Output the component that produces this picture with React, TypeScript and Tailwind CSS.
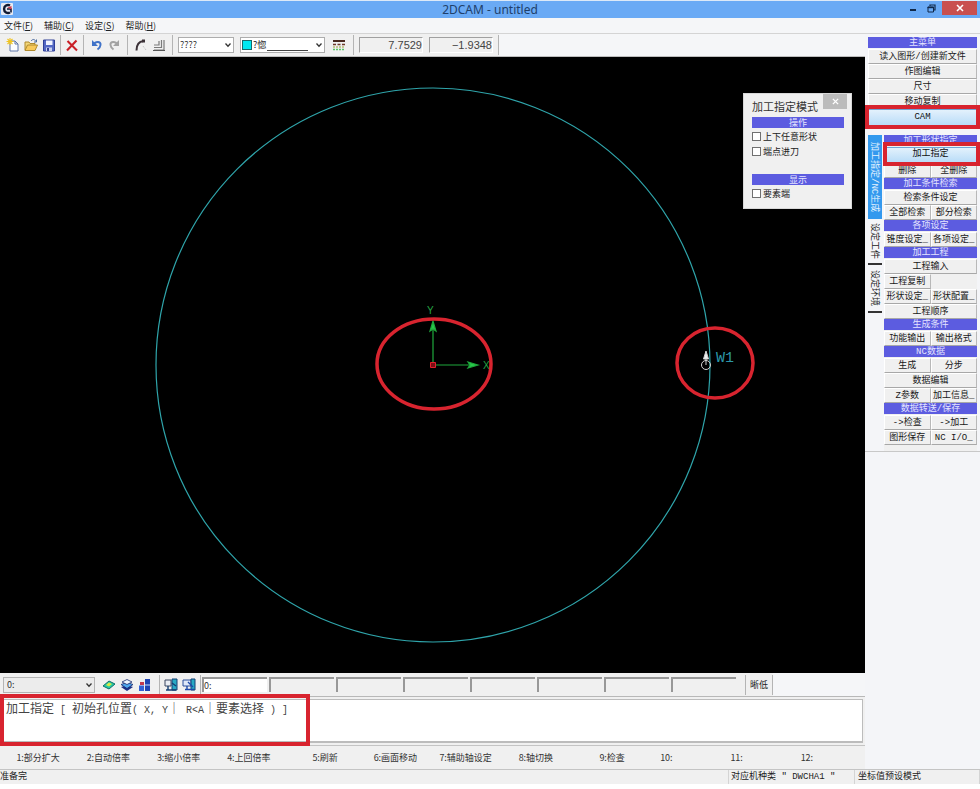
import React, { useState } from 'react'

type MenuRow =
    | { kind: 'title'; label: string }
    | { kind: 'row'; labels: string[]; half?: boolean }

const menus = [
    { label: '文件', key: 'F' },
    { label: '辅助', key: 'C' },
    { label: '设定', key: 'S' },
    { label: '帮助', key: 'H' },
]

const mainMenu = ['读入图形/创建新文件', '作图编辑', '尺寸', '移动复制']

const camMenu: MenuRow[] = [
    { kind: 'row', labels: ['删除', '全删除'] },
    { kind: 'title', label: '加工条件检索' },
    { kind: 'row', labels: ['检索条件设定'] },
    { kind: 'row', labels: ['全部检索', '部分检索'] },
    { kind: 'title', label: '各项设定' },
    { kind: 'row', labels: ['锥度设定_', '各项设定_'] },
    { kind: 'title', label: '加工工程' },
    { kind: 'row', labels: ['工程输入'] },
    { kind: 'row', labels: ['工程复制'], half: true },
    { kind: 'row', labels: ['形状设定_', '形状配置_'] },
    { kind: 'row', labels: ['工程顺序'] },
    { kind: 'title', label: '生成条件' },
    { kind: 'row', labels: ['功能输出', '输出格式'] },
    { kind: 'title', label: 'NC数据' },
    { kind: 'row', labels: ['生成', '分步'] },
    { kind: 'row', labels: ['数据编辑'] },
    { kind: 'row', labels: ['Z参数', '加工信息_'] },
    { kind: 'title', label: '数据转送/保存' },
    { kind: 'row', labels: ['->检查', '->加工'] },
    { kind: 'row', labels: ['图形保存', 'NC I/O_'] },
]

const functionKeys = [
    ['1:部分扩大', '2:自动倍率', '3:缩小倍率', '4:上回倍率'],
    ['5:刷新', '6:画面移动', '7:辅助轴设定', '8:轴切换'],
    ['9:检查', '10:', '11:', '12:'],
]

const Separator = () => <div className="h-5 w-px shrink-0 bg-[#b4b4b4]" />

const Chevron = () => (
    <svg viewBox="0 0 8 6" className="pointer-events-none absolute right-[2px] top-1/2 h-[6px] w-[8px] -translate-y-1/2">
        <path d="M1.5 1.5 4 4.2 6.5 1.5" fill="none" stroke="#333" strokeWidth="1.3" />
    </svg>
)

const IconButton = ({ label, children }: { label: string; children: React.ReactNode }) => (
    <button aria-label={label} className="size-[14px] shrink-0">
        <svg viewBox="0 0 14 14" className="size-full">{children}</svg>
    </button>
)

const SectionTitle = ({ label }: { label: string }) => (
    <div className="mb-px h-[11px] overflow-hidden bg-[#5c5ce0] text-center leading-[12px] text-[#e4e4ff]">{label}</div>
)

const MenuButton = ({ label }: { label: string }) => (
    <button className="h-[15px] flex-1 overflow-hidden whitespace-nowrap border border-b-[#a8a8a8] border-l-white border-r-[#b8b8b8] border-t-white bg-[#f0f0f0] leading-[14px] text-[#181818]">
        {label}
    </button>
)

const activeButton = 'w-full border border-[#6fa5d6] bg-linear-to-b from-[#e3f1fc] to-[#b9dcf8] text-[#111]'

const TitleBar = () => (
    <header className="relative flex h-[18px] shrink-0 items-center justify-center border-t border-[#dce9f8] bg-[#6aaaf5]">
        <svg viewBox="0 0 12 12" className="absolute left-px top-[2px] size-3">
            <rect width="12" height="12" rx="1" fill="#e6e9f2" />
            <path d="M9 2.5A4 4 0 1 0 9 9.5" fill="none" stroke="#111a33" strokeWidth="2.4" />
            <path d="M6 6h4v3.5" fill="none" stroke="#111a33" strokeWidth="1.6" />
            <path d="M6.5 4.5 10.5 3v3.5z" fill="#d43a4c" />
        </svg>
        <h1 className="font-['Noto_Sans',sans-serif] text-[12px] leading-4 text-[#20406b]">2DCAM - untitled</h1>
        <div className="absolute right-[3px] top-0 flex h-[14px] items-center">
            <button aria-label="最小化" className="flex h-full w-5 items-center justify-center">
                <svg viewBox="0 0 7 7" className="size-[7px]"><path d="M0 5h6" stroke="#10294a" strokeWidth="2" /></svg>
            </button>
            <button aria-label="还原" className="mr-[3px] flex h-full w-4 items-center justify-center">
                <svg viewBox="0 0 9 9" className="size-[9px]">
                    <path d="M3 2V1h5v5H7" fill="none" stroke="#10294a" strokeWidth="1.2" />
                    <path d="M1 3h5.5v5H1z" fill="none" stroke="#10294a" />
                    <path d="M.5 3.5H7" stroke="#10294a" strokeWidth="1.4" />
                </svg>
            </button>
            <button aria-label="关闭" className="flex h-full w-[35px] items-center justify-center bg-[#c9504f]">
                <svg viewBox="0 0 8 8" className="size-2"><path d="m1 1 6 6M7 1 1 7" stroke="#fff" strokeWidth="1.6" /></svg>
            </button>
        </div>
    </header>
)

const Toolbar = () => (
    <div className="flex h-[23px] shrink-0 items-center border-b border-[#bdbdbd] bg-[#f0f0f0]">
        <div className="flex items-center gap-1 pl-[6px]">
            <IconButton label="新建">
                <path d="M4 3h5l3 3v7H4z" fill="#fdfdff" stroke="#5f76a8" />
                <path d="M9 3v3h3" fill="none" stroke="#5f76a8" />
                <path d="M4 0v7M.5 3.5h7M1.5 1l5 5M6.5 1l-5 5" stroke="#f0c420" strokeWidth="1.1" />
            </IconButton>
            <IconButton label="打开">
                <path d="M1 12V4h4l1 1.5h5V7" fill="#f3d77a" stroke="#b08a2c" />
                <path d="M1 12.5 3.5 7H13.5L11 12.5z" fill="#f7c95a" stroke="#b08a2c" />
                <path d="M7 3c2-2.5 4-1.5 5 .5M12.5 1.5V4H10" fill="none" stroke="#4b6a9e" />
            </IconButton>
            <IconButton label="保存">
                <path d="M1.5 2h11v11h-11z" fill="#5468c4" stroke="#2f3f96" />
                <path d="M4 2.5h6.5V7H4z" fill="#f1f4ff" />
                <path d="M4 9.5h6V13H4z" fill="#c9d0ee" />
                <path d="M5 10h2v3H5z" fill="#2f3f96" />
            </IconButton>
        </div>
        <div className="flex items-center gap-1 pl-1">
            <Separator />
            <IconButton label="删除">
                <path d="M2.5 3 12 12.5M11.5 2.5 2 12.5" stroke="#c91f26" strokeWidth="2.1" />
            </IconButton>
            <Separator />
        </div>
        <div className="flex items-center gap-[3px] px-[6px]">
            <IconButton label="撤销">
                <path d="M3.5 6.5C5.5 3 11 3 10.5 7 10.3 9 9 10.5 7.5 11.5" fill="none" stroke="#3f72c8" strokeWidth="2" />
                <path d="M2 2v6h6z" fill="#3f72c8" />
            </IconButton>
            <IconButton label="重做">
                <path d="M10.5 6.5C8.5 3 3 3 3.5 7 3.7 9 5 10.5 6.5 11.5" fill="none" stroke="#a3a3a3" strokeWidth="2" />
                <path d="M12 2v6H6z" fill="#a3a3a3" />
            </IconButton>
        </div>
        <Separator />
        <div className="flex items-center gap-1 px-[6px]">
            <IconButton label="圆弧">
                <path d="M2.5 12.5C2.5 7 5 3.5 9.5 3" fill="none" stroke="#3c3238" strokeWidth="2" />
                <path d="M8 1.5h3v3H8z" fill="#3c3238" />
                <path d="m9 8 3 4" stroke="#bbb" strokeDasharray="1 1" />
            </IconButton>
            <IconButton label="层叠">
                <path d="M2 12h10V2M2 9.5h7.5V2M2 7h5V3" fill="none" stroke="#7b7b7b" strokeWidth="1.2" />
                <path d="M1 12.5h12" stroke="#555" />
            </IconButton>
        </div>
        <Separator />
        <div className="relative ml-[5px] w-14">
            <select aria-label="线型" className="block h-4 w-full appearance-none border border-[#adadad] bg-white pl-px text-[9px] leading-[14px] text-[#333]">
                <option>????</option>
            </select>
            <Chevron />
        </div>
        <div className="relative ml-[6px] w-[85px]">
            <select aria-label="颜色" className="block h-4 w-full appearance-none border border-[#adadad] bg-white pl-[12px] text-[9px] leading-[14px] text-[#222]">
                <option>?惚</option>
            </select>
            <span className="pointer-events-none absolute left-[2px] top-[3px] size-[10px] border border-[#176a6a] bg-[#00e8f0]" />
            <span className="pointer-events-none absolute bottom-[2px] left-[27px] right-[17px] h-px bg-[#444]" />
            <Chevron />
        </div>
        <div className="flex items-center gap-[7px] px-[7px] pr-[5px]">
            <IconButton label="线宽">
                <path d="M1 3h12" stroke="#4a2a20" strokeWidth="2" />
                <path d="M1 6.5h12" stroke="#6e3a2b" strokeWidth="1.5" strokeDasharray="3 1.5" />
                <path d="M1 9h12" stroke="#a0a038" strokeDasharray="2 1" />
                <path d="M1 11.5h12" stroke="#58c468" strokeWidth="1.5" strokeDasharray="2 1" />
            </IconButton>
            <Separator />
        </div>
        <output className="h-4 w-16 border border-b-white border-l-[#a0a0a0] border-r-white border-t-[#a0a0a0] text-right font-['Liberation_Sans',sans-serif] text-[11px] leading-[15px] text-[#444]">7.7529</output>
        <output className="ml-[6px] mr-[5px] h-4 w-16 border border-b-white border-l-[#a0a0a0] border-r-white border-t-[#a0a0a0] text-right font-['Liberation_Sans',sans-serif] text-[11px] leading-[15px] text-[#444]">−1.9348</output>
        <Separator />
        <div className="h-full flex-1 bg-[#f5f6f8]" />
    </div>
)

const CheckRow = ({ id, label }: { id: string; label: string }) => {
    const [checked, setChecked] = useState<boolean>(false);
    return (
        <div className="flex h-[15px] items-center gap-[2px]">
            <input
                id={id}
                type="checkbox"
                checked={checked}
                onChange={() => setChecked(!checked)}
                className="size-[9px] shrink-0 appearance-none border border-[#707070] bg-white checked:bg-[#5c5ce0]"
            />
            <label htmlFor={id} className="whitespace-nowrap">{label}</label>
        </div>
    )
}

const ModeDialog = () => (
    <section className="absolute right-[13px] top-[36px] w-[109px] border border-[#d8d8d8] bg-[#f0f0f0] px-2 pb-[7px] text-[9px] leading-[11px] text-[#222]">
        <button aria-label="关闭" className="absolute right-1 top-0 flex h-[15px] w-6 items-center justify-center bg-[#bcbcbc]">
            <svg viewBox="0 0 8 8" className="size-[7px]"><path d="m1 1 6 6M7 1 1 7" stroke="#fff" strokeWidth="1.6" /></svg>
        </button>
        <h2 className="pb-[3px] pt-1 text-[11px] leading-4 text-[#333]">加工指定模式</h2>
        <div className="mr-[-1px]">
            <SectionTitle label="操作" />
            <CheckRow id="any-shape" label="上下任意形状" />
            <CheckRow id="end-feed" label="端点进刀" />
            <div className="mt-[15px]"><SectionTitle label="显示" /></div>
            <CheckRow id="element-end" label="要素端" />
        </div>
    </section>
)

const Canvas = () => (
    <main className="relative min-h-0 flex-1 overflow-hidden bg-black">
        <svg viewBox="0 0 865 616" className="absolute inset-0 size-full">
            <circle cx="433" cy="308" r="277" fill="none" stroke="#2fa5ab" strokeWidth="1.2" />
            <g stroke="#1fa83c" strokeWidth="1.2" fill="#27c94a">
                <path d="M433 305V268M436 308h40" />
                <path d="m433 264-3 10 3-2 3 2zM478 308l-10-3 2 3-2 3z" />
            </g>
            <path d="M430.500 305.500h5v5h-5z" fill="#7a0d14" stroke="#e0202c" />
            <g fill="#26a544" className="font-['Liberation_Sans',sans-serif] text-[10px]">
                <text x="427" y="257">Y</text>
                <text x="483" y="312">X</text>
            </g>
            <g stroke="#d4d4d4" fill="none">
                <circle cx="706" cy="308" r="4.500" />
                <path d="M706 308v-9" />
                <path d="m706 294-2.500 8h5z" fill="#eee" />
            </g>
            <text x="716" y="305" fill="#2b96a8" className="font-['Liberation_Mono',monospace] text-[15px]">W1</text>
            <g fill="none" stroke="#d8242f" strokeWidth="3.500">
                <ellipse cx="434" cy="307" rx="57" ry="45" />
                <ellipse cx="715" cy="306" rx="38" ry="35" />
            </g>
        </svg>
        <ModeDialog />
    </main>
)

const LayerBar = () => (
    <div className="flex h-6 shrink-0 items-center bg-[#f5f6f8]">
        <div className="flex h-full flex-1 items-center border-b border-[#b8b8b8] bg-[#f0f0f0] pl-[3px]">
            <div className="relative w-[92px]">
                <select aria-label="图层" className="block h-4 w-full appearance-none border border-[#b4b4b4] bg-[#ececec] pl-[3px] text-[9px] leading-[14px] text-[#333]">
                    <option>0:</option>
                </select>
                <Chevron />
            </div>
            <div className="flex items-center gap-1 px-[7px]">
                <IconButton label="当前层">
                    <path d="m1 8 6-5 6 3-6 5z" fill="#25c9a6" stroke="#126f6a" />
                    <path d="m4 7 3-2.500 3 1.500-3 2.500z" fill="#d7ea46" />
                </IconButton>
                <IconButton label="层列表">
                    <path d="m1 9 6-2 6 2-6 4z" fill="#1b2f87" />
                    <path d="m1 6.500 6-2 6 2-6 4z" fill="#4fa6ee" stroke="#16296f" strokeWidth=".8" />
                    <path d="m2 4 5-2.500L12 4 7 6.500z" fill="#eef6ff" stroke="#16296f" strokeWidth=".8" />
                </IconButton>
                <IconButton label="组">
                    <path d="M7 1h5v12H7z" fill="#1f45b4" />
                    <path d="M1 7.500h5V13H1z" fill="#3361d6" />
                    <path d="M2 4h4v3H2z" fill="#c33a4e" />
                    <path d="M7 7h5" stroke="#c9dcff" />
                </IconButton>
            </div>
            <Separator />
            <div className="flex items-center gap-1 px-1">
                <IconButton label="窗口一">
                    <path d="M1 2h6v6H1z" fill="#e9edf4" stroke="#3b4760" />
                    <path d="M8 1h5v11H8z" fill="#27a9c4" stroke="#143f73" />
                    <path d="M2 12h10M4 8v4M8 5l4 3" stroke="#143f73" strokeWidth="1.4" />
                </IconButton>
                <IconButton label="窗口二">
                    <path d="M1 2h8v6H1z" fill="#dfe8f8" stroke="#2b4f9b" />
                    <path d="M9 1h4v11H9z" fill="#27a9c4" stroke="#143f73" />
                    <path d="M3 11.500h9M5 8v3M6 4l5 5" stroke="#1d49a8" strokeWidth="1.4" />
                </IconButton>
            </div>
            <Separator />
            <div className="ml-px flex flex-1 gap-[2px]">
                {Array.from({ length: 8 }, (_, i) => (
                    <input
                        key={i}
                        aria-label={`坐标 ${i + 1}`}
                        defaultValue={i === 0 ? '0:' : ''}
                        className="h-[15px] w-0 min-w-0 flex-1 border-l-2 border-t-2 border-[#989898] bg-[#f0f0f0] text-[9px] text-[#333] first:bg-white"
                    />
                ))}
            </div>
            <div className="flex items-center pl-[9px]">
                <Separator />
                <button className="w-[26px] text-[9px] text-[#222]">晰低</button>
                <Separator />
            </div>
        </div>
        <div className="h-full w-[92px] border-b border-[#b8b8b8]" />
    </div>
)

const Latin = ({ children }: { children: string }) => (
    <span className="font-['Liberation_Mono',monospace] text-[10px]">{children}</span>
)

const CommandLine = () => (
    <div className="relative flex h-12 shrink-0 bg-[#f0f0f0] py-[2px] pl-px pr-[2px]">
        <div className="flex-1 whitespace-pre border border-b-2 border-[#bcbcbc] bg-white pl-1 text-[12px] leading-4 text-[#444]">
            加工指定<Latin>{' [ '}</Latin>初始孔位置<Latin>{'( X, Y'}</Latin>｜<Latin>{' R<A'}</Latin>｜要素选择<Latin>{' ) ]'}</Latin>
        </div>
        <div className="pointer-events-none absolute -bottom-px -top-[3px] left-0 w-[310px] border-4 border-[#d8242f]" />
    </div>
)

const FunctionKeys = () => (
    <div className="flex h-6 shrink-0 gap-[6px] border-t border-[#c4c4c4] bg-[#f0f0f0] pl-[3px] pr-[7px]">
        {functionKeys.map((group) => (
            <div key={group[0]} className="grid flex-1 grid-cols-4">
                {group.map((label) => (
                    <button key={label} className={`whitespace-nowrap text-[9px] text-[#333] ${label.endsWith(':') ? 'pr-8' : ''}`}>
                        {label}
                    </button>
                ))}
            </div>
        ))}
    </div>
)

const SideMenu = () => (
    <aside className="w-[115px] shrink-0 bg-[#f4f5f8] font-['Liberation_Mono','Noto_Sans_CJK_SC',monospace] text-[9px]">
        <div className="px-[3px] pt-[3px]">
            <SectionTitle label="主菜单" />
            {mainMenu.map((label) => (
                <div key={label} className="flex"><MenuButton label={label} /></div>
            ))}
            <div className="relative">
                <button className={`${activeButton} block h-[17px]`}>CAM</button>
                <div className="pointer-events-none absolute -inset-x-[3px] -bottom-[3px] -top-1 border-4 border-[#d8242f]" />
            </div>
        </div>
        <div className="mt-[9px] flex border-b border-[#c8c8c8] pl-[3px] pr-[3px]">
            <div role="tablist" className="mr-[2px] flex w-[14px] flex-col items-center text-[#222]">
                <button role="tab" aria-selected="true" className="flex h-[84px] w-full items-center justify-center whitespace-nowrap bg-[#3399ee] pr-[3px] text-[#e8f4ff] [text-orientation:sideways] [writing-mode:vertical-rl]">加工指定/NC生成</button>
                <button role="tab" aria-selected="false" className="flex h-[46px] w-full items-center justify-center border-b-2 border-[#333] pr-[3px] [text-orientation:sideways] [writing-mode:vertical-rl]">设定工件</button>
                <button role="tab" aria-selected="false" className="flex h-12 w-full items-center justify-center border-b-2 border-[#333] pr-[3px] [text-orientation:sideways] [writing-mode:vertical-rl]">设定环境</button>
            </div>
            <div className="min-w-0 flex-1 bg-[#f0f0f0] pb-[6px]">
                <SectionTitle label="加工形状指定" />
                <div className="relative">
                    <button className={`${activeButton} block h-4`}>加工指定</button>
                    <div className="pointer-events-none absolute -bottom-[3px] -left-px -right-[3px] -top-[5px] border-4 border-[#d8242f]" />
                </div>
                {camMenu.map((item, i) =>
                    item.kind === 'title' ? (
                        <SectionTitle key={i} label={item.label} />
                    ) : (
                        <div key={i} className={`flex ${item.half ? 'w-1/2' : ''}`}>
                            {item.labels.map((label) => <MenuButton key={label} label={label} />)}
                        </div>
                    )
                )}
            </div>
        </div>
    </aside>
)

const App = () => {
    return (
        <div className="flex h-screen flex-col bg-white pb-[5px] font-['Noto_Sans_CJK_SC',sans-serif]">
            <TitleBar />
            <nav className="flex h-4 shrink-0 items-center gap-[11px] border-b border-[#d4d4d4] bg-[#f5f6f8] pl-1 text-[9px] text-[#222]">
                {menus.map((menu) => (
                    <button key={menu.key} className="leading-[14px]">
                        {menu.label}(<span className="underline">{menu.key}</span>)
                    </button>
                ))}
            </nav>
            <div className="flex min-h-0 flex-1">
                <div className="flex min-w-0 flex-1 flex-col">
                    <Toolbar />
                    <Canvas />
                    <LayerBar />
                    <CommandLine />
                    <FunctionKeys />
                </div>
                <SideMenu />
            </div>
            <footer className="flex h-[15px] shrink-0 whitespace-pre border-t border-[#c4c4c4] bg-[#f0f0f0] font-['Liberation_Mono','Noto_Sans_CJK_SC',monospace] text-[9px] leading-[14px] text-[#222]">
                <span className="flex-1">准备完</span>
                <span className="w-[126px] border-l border-[#d4d4d4] pl-[2px]">对应机种类 " DWCHA1 "</span>
                <span className="w-[126px] border-l border-r border-[#d4d4d4] pl-[3px]">坐标值预设模式</span>
            </footer>
        </div>
    )
}

export default App
